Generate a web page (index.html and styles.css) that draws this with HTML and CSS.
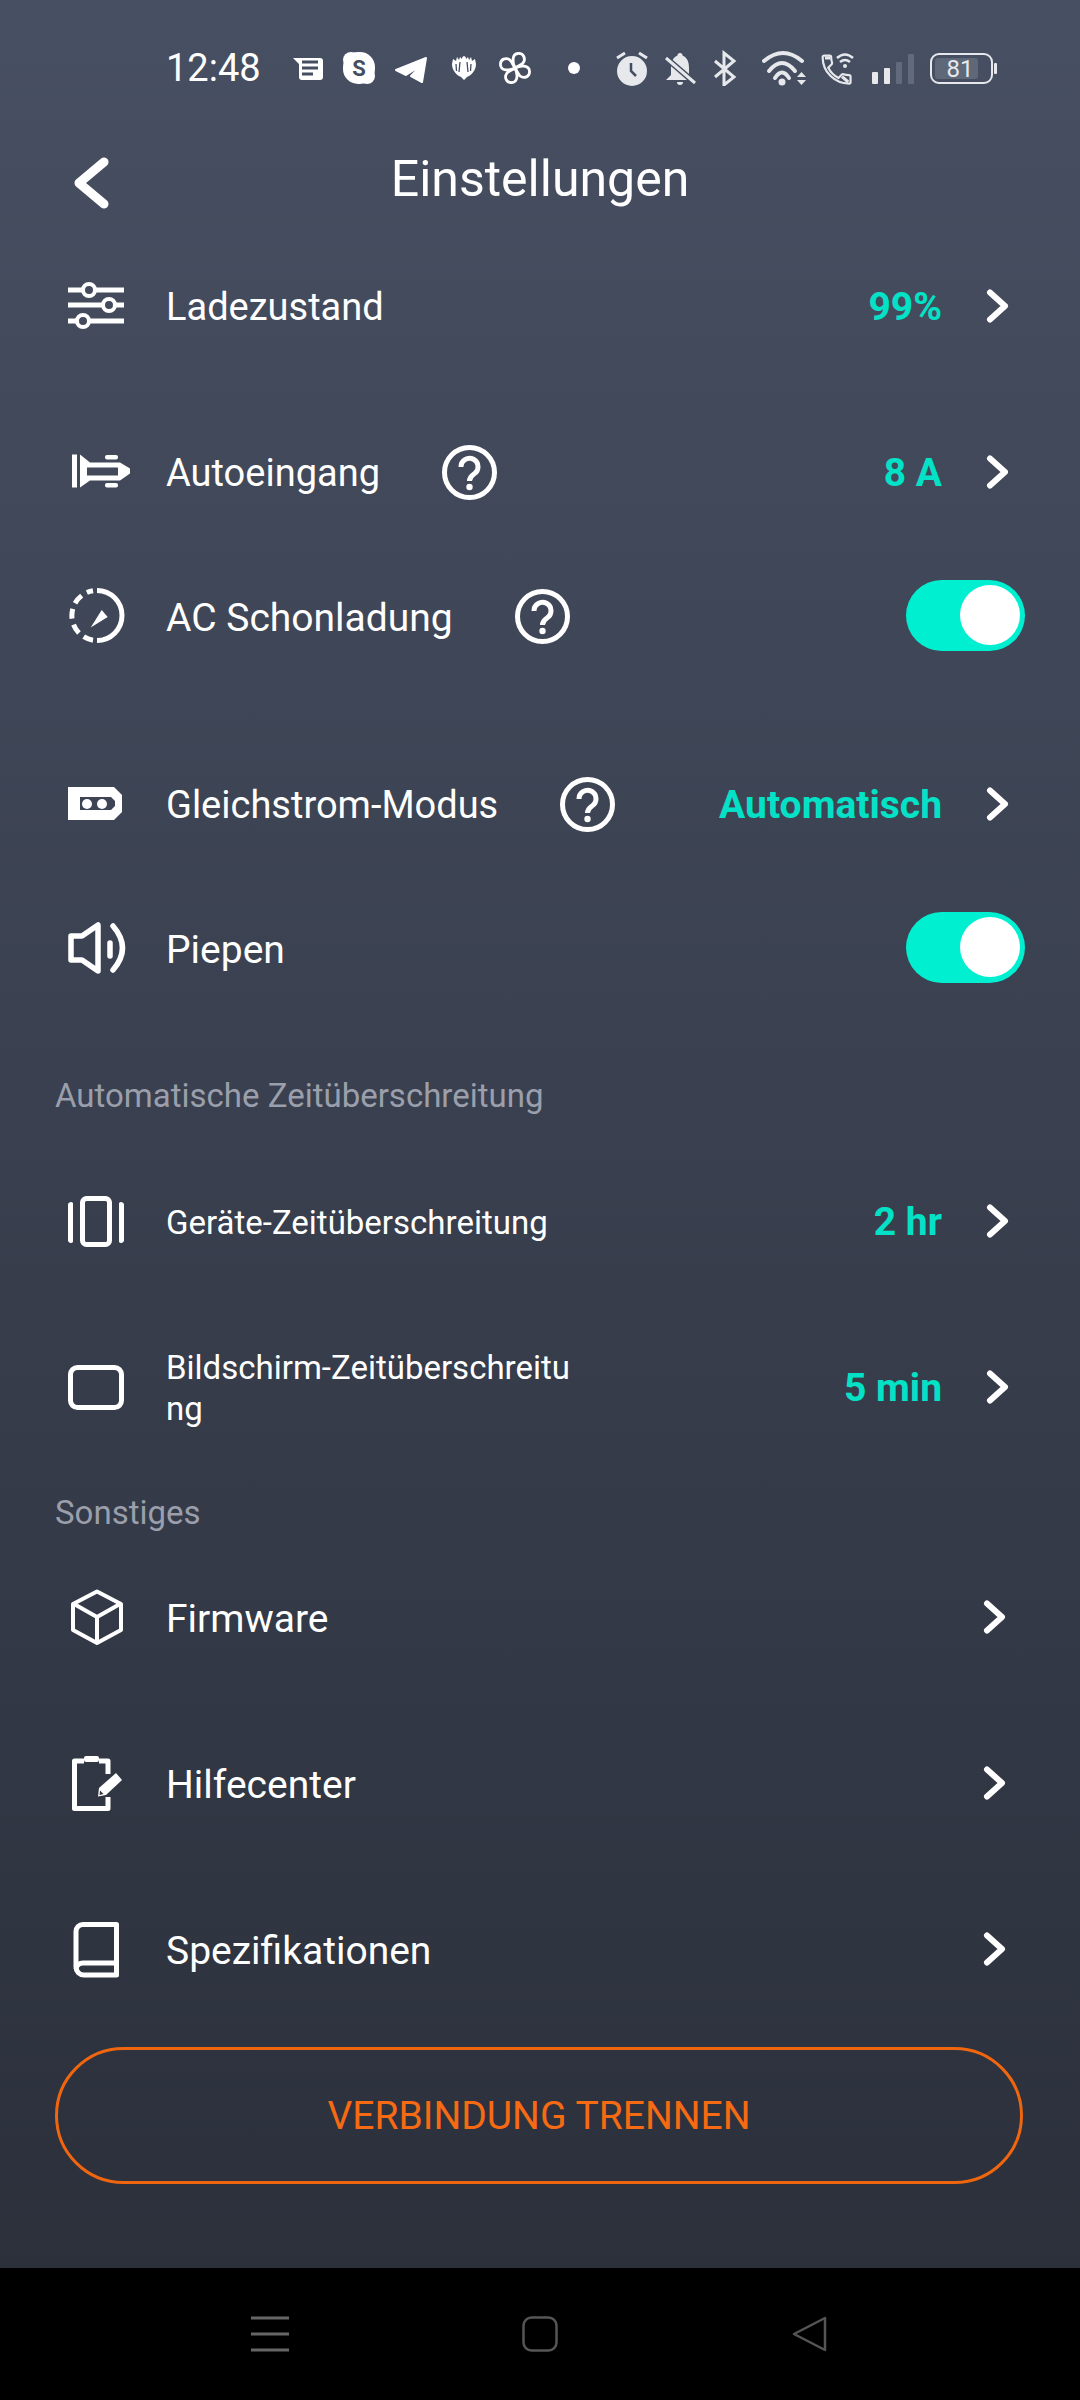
FILE: index.html
```html
<!DOCTYPE html>
<html lang="de">
<head>
    <meta charset="UTF-8">
    <title>Einstellungen</title>
    <link rel="stylesheet" href="styles.css">
</head>
<body>
<div class="status">
    <span class="clock">12:48</span>
    <svg class="st" width="50" height="36" viewBox="0 0 50 36"><path d="M0 8H27a3 3 0 0 1 3 3V27a3 3 0 0 1-3 3H9a3 3 0 0 1-3-3V14Z" fill="#fff"/><path d="M9 12H25M9 18H25M9 24H20" stroke="#454e60" stroke-width="3"/></svg>
    <svg class="st" width="52" height="36" viewBox="0 0 52 36"><rect x="0" y="2" width="32" height="32" rx="15" fill="#fff"/><circle cx="8" cy="10" r="8" fill="#fff"/><circle cx="24" cy="26" r="8" fill="#fff"/><text x="16" y="26" class="st-s">S</text></svg>
    <svg class="st" width="56" height="36" viewBox="0 0 56 36"><path d="M31 8L27 32L16 26L27 15L11 25L1 20Z" fill="#fff" stroke="#fff" stroke-width="2" stroke-linejoin="round"/></svg>
    <svg class="st" width="48" height="36" viewBox="0 0 48 36"><path d="M12.5 6c1.500 0 2.500 1 2.500 3l2-2 1 3 2-3 1 4 3-2 1 5c0 6-4 10-7 12l-2 1-3 3-3-3-2-1c-3-2-7-6-7-12l1-5 3 2 1-4 2 3 1-3 2 2c0-2 1-3 2.500-3Z" fill="#fff"/><path d="M9 12L8 22M5 14L5.500 21M16 12L17 22M20 14L19.500 21" stroke="#454e60" stroke-width="1.300"/></svg>
    <svg class="st" width="69" height="36" viewBox="0 0 69 36">
        <g fill="none" stroke="#fff" stroke-width="2.8" stroke-linejoin="round">
            <path d="M16 18C13 12 13 4 19 3.500C25 3 27 9 24 13C22 15 19 16 16 18Z"/>
            <path d="M16 18C13 12 13 4 19 3.500C25 3 27 9 24 13C22 15 19 16 16 18Z" transform="rotate(90 16 18)"/>
            <path d="M16 18C13 12 13 4 19 3.500C25 3 27 9 24 13C22 15 19 16 16 18Z" transform="rotate(180 16 18)"/>
            <path d="M16 18C13 12 13 4 19 3.500C25 3 27 9 24 13C22 15 19 16 16 18Z" transform="rotate(270 16 18)"/>
        </g>
    </svg>
    <svg class="st" width="48" height="36" viewBox="0 0 48 36"><circle cx="6" cy="18" r="6" fill="#fff"/></svg>
    <svg class="st" width="49" height="36" viewBox="0 0 49 36"><circle cx="16" cy="21" r="15" fill="#e6e8ec"/><path d="M15 13V21L20 26" fill="none" stroke="#454e60" stroke-width="2.5"/><path d="M1 8L9 3M31 8L23 3" stroke="#e6e8ec" stroke-width="3"/></svg>
    <svg class="st" width="49" height="36" viewBox="0 0 49 36"><path d="M15 3a2.500 2.500 0 0 1 2.500 2.500C23 8 24 13 24 18V25L29 30H1L6 25V18C6 13 7 8 12.500 5.500A2.500 2.500 0 0 1 15 3ZM12 32a3 3 0 0 0 6 0Z" fill="#e6e8ec"/><path d="M1 8L30 33" stroke="#454e60" stroke-width="6"/><path d="M1 8L30 33" stroke="#e6e8ec" stroke-width="3"/></svg>
    <svg class="st" width="48" height="36" viewBox="0 0 48 36"><path d="M1 11L20 27L10 35V3L20 11L1 27" fill="none" stroke="#e6e8ec" stroke-width="3"/></svg>
    <svg class="st" width="59" height="36" viewBox="0 0 59 36"><g fill="none" stroke="#e6e8ec" stroke-width="4" stroke-linecap="round"><path d="M2 11Q21-5 40 11"/><path d="M7 21Q20 5 33 21"/><path d="M13 28Q20 17 27 28"/></g><circle cx="20" cy="32" r="3.5" fill="#e6e8ec"/><path d="M35 27L39.500 22L44 27ZM35 30L39.500 35L44 30Z" fill="#e6e8ec"/></svg>
    <svg class="st" width="51" height="36" viewBox="0 0 51 36"><g transform="translate(-3 1) scale(1.55)"><path d="M6.620 10.790c1.440 2.830 3.760 5.140 6.590 6.590l2.200-2.200c.27-.27.67-.36 1.020-.24 1.120.37 2.330.57 3.570.57.55 0 1 .45 1 1V20c0 .55-.45 1-1 1-9.390 0-17-7.610-17-17 0-.55.45-1 1-1h3.500c.55 0 1 .45 1 1 0 1.250.2 2.450.57 3.570.11.35.03.74-.25 1.020l-2.200 2.200z" fill="none" stroke="#e6e8ec" stroke-width="1.4"/><path d="M4.500 4.500H8M15.500 16.500l4 3.500" stroke="#e6e8ec" stroke-width="2"/></g><g fill="none" stroke="#e6e8ec" stroke-width="2.5"><path d="M16 8Q24 1 32 8"/><path d="M19 12Q24 8 29 12"/></g><circle cx="24" cy="16" r="2" fill="#e6e8ec"/></svg>
    <svg class="st" width="58" height="36" viewBox="0 0 58 36"><rect x="0" y="22" width="6" height="12" rx="1" fill="#e6e8ec"/><rect x="12" y="18" width="6" height="16" rx="1" fill="#e6e8ec"/><rect x="24" y="12" width="6" height="22" rx="1" fill="#626b7c"/><rect x="36" y="4" width="6" height="30" rx="1" fill="#626b7c"/></svg>
    <svg class="st" width="68" height="36" viewBox="0 0 68 36"><rect x="1" y="4" width="61" height="29" rx="8" fill="none" stroke="#e6e8ec" stroke-width="2"/><rect x="5" y="8" width="43" height="21" rx="3" fill="#5f6878"/><rect x="64" y="13" width="3" height="11" rx="1" fill="#e6e8ec"/><text x="30" y="27" class="st-batt">81</text></svg>
</div>

<div class="topbar">
    <svg class="back" width="40" height="64" viewBox="0 0 40 64"><path d="M34 15L9 36L34 57" fill="none" stroke="#fff" stroke-width="9" stroke-linecap="round" stroke-linejoin="round"/></svg>
    <h1 class="title">Einstellungen</h1>
</div>

<div class="list">
    <div class="row">
        <svg class="ico" viewBox="0 0 56 56"><g fill="none" stroke="#fff" stroke-width="5"><path d="M0 12H15M27 12H56M0 27H35M47 27H56M0 43H9M21 43H56"/><g stroke-width="4"><circle cx="21" cy="12" r="6"/><circle cx="41" cy="27" r="6"/><circle cx="15" cy="43" r="6"/></g></g></svg>
        <span class="label">Ladezustand</span>
        <span class="value">99%</span>
        <svg class="chev" viewBox="0 0 28 40"><path d="M4 6.500L19 20L4 33.500"/></svg>
    </div>
    <div class="row">
        <svg class="ico" viewBox="0 0 56 56"><g fill="#fff"><rect x="4" y="10.5" width="5" height="33"/><path fill-rule="evenodd" d="M12 10.500L22 18.500H52L62 24.500V29.500L52 36.500H22L12 43.500ZM19 23.500V31.500H50V23.500Z"/><rect x="37" y="11" width="13" height="4.5" rx="2"/><rect x="37" y="39" width="13" height="4.5" rx="2"/></g></svg>
        <span class="label">Autoeingang</span>
        <svg class="help" viewBox="0 0 55 55"><circle cx="27.5" cy="27.5" r="25" fill="none" stroke="#fff" stroke-width="5"/><path d="M19 22a8.500 8.500 0 1 1 13 7c-3 2-4.500 3.500-4.500 7" fill="none" stroke="#fff" stroke-width="5"/><circle cx="27.5" cy="42" r="3.2" fill="#fff"/></svg>
        <span class="value">8 A</span>
        <svg class="chev" viewBox="0 0 28 40"><path d="M4 6.500L19 20L4 33.500"/></svg>
    </div>
    <div class="row row-near">
        <svg class="ico" viewBox="0 0 56 56"><g fill="none" stroke="#fff" stroke-width="5"><path d="M29 2.500A25 25 0 0 1 29 52.500"/><path d="M25 52.200A25 25 0 0 1 25 2.800" stroke-dasharray="10 6"/></g><path d="M33.700 22L39.700 29L22.700 39.600Z" fill="#fff"/></svg>
        <span class="label label-big">AC Schonladung</span>
        <svg class="help" viewBox="0 0 55 55"><circle cx="27.5" cy="27.5" r="25" fill="none" stroke="#fff" stroke-width="5"/><path d="M19 22a8.500 8.500 0 1 1 13 7c-3 2-4.500 3.500-4.500 7" fill="none" stroke="#fff" stroke-width="5"/><circle cx="27.5" cy="42" r="3.2" fill="#fff"/></svg>
        <span class="toggle"><span class="knob"></span></span>
    </div>
    <div class="row row-far">
        <svg class="ico" viewBox="0 0 56 56"><path fill="#fff" fill-rule="evenodd" d="M0 11H46L54 19V36L46 44H0ZM12 21V34H43L47 30V25L43 21Z"/><circle cx="19" cy="28" r="5" fill="#fff"/><circle cx="34" cy="28" r="5" fill="#fff"/></svg>
        <span class="label">Gleichstrom-Modus</span>
        <svg class="help" viewBox="0 0 55 55"><circle cx="27.5" cy="27.5" r="25" fill="none" stroke="#fff" stroke-width="5"/><path d="M19 22a8.500 8.500 0 1 1 13 7c-3 2-4.500 3.500-4.500 7" fill="none" stroke="#fff" stroke-width="5"/><circle cx="27.5" cy="42" r="3.2" fill="#fff"/></svg>
        <span class="value">Automatisch</span>
        <svg class="chev" viewBox="0 0 28 40"><path d="M4 6.500L19 20L4 33.500"/></svg>
    </div>
    <div class="row row-near">
        <svg class="ico" viewBox="0 0 56 56"><g fill="none" stroke="#fff" stroke-width="5.5" stroke-linecap="round" stroke-linejoin="round"><path d="M3 16H14L30 5V51L14 40H3Z"/><path d="M42 23V36"/><path d="M45 6Q64 28 45 50"/></g></svg>
        <span class="label label-big">Piepen</span>
        <span class="toggle"><span class="knob"></span></span>
    </div>

    <div class="section section-auto">Automatische Zeitüberschreitung</div>
    <div class="row row-tight">
        <svg class="ico" viewBox="0 0 56 56"><g fill="none" stroke="#fff" stroke-width="5"><rect x="14.5" y="5.5" width="27" height="46" rx="4"/></g><path d="M5 10a3 3 0 0 0-5 3V46a3 3 0 0 0 5 3ZM51 10a3 3 0 0 1 5 3V46a3 3 0 0 1-5 3Z" fill="#fff"/></svg>
        <span class="label label-small">Geräte-Zeitüberschreitung</span>
        <span class="value">2 hr</span>
        <svg class="chev" viewBox="0 0 28 40"><path d="M4 6.500L19 20L4 33.500"/></svg>
    </div>
    <div class="row">
        <svg class="ico" viewBox="0 0 56 56"><rect x="2.5" y="8.5" width="51" height="40" rx="7" fill="none" stroke="#fff" stroke-width="5"/></svg>
        <span class="label label-small label-wrap">Bildschirm-Zeitüberschreitu<br>ng</span>
        <span class="value">5 min</span>
        <svg class="chev" viewBox="0 0 28 40"><path d="M4 6.500L19 20L4 33.500"/></svg>
    </div>

    <div class="section section-misc">Sonstiges</div>
    <div class="row row-first row-plain">
        <svg class="ico" viewBox="0 0 56 56"><g fill="none" stroke="#fff" stroke-width="4" stroke-linejoin="round"><path d="M29 2.500L53 15V41L29 54L5 41V15Z"/><path d="M6 15L29 28L52 15M29 28V54"/></g></svg>
        <span class="label label-big">Firmware</span>
        <svg class="chev" viewBox="0 0 28 40"><path d="M4 6.500L19 20L4 33.500"/></svg>
    </div>
    <div class="row row-plain">
        <svg class="ico" viewBox="0 0 56 56"><g fill="none" stroke="#fff" stroke-width="5" stroke-linejoin="round"><path d="M16 6H6.500V53.500H40V42"/><path d="M31 6H40V19"/></g><rect x="16" y="1" width="15" height="6" rx="2" fill="#fff"/><path d="M48 18L54 25L38 40L30 41.500L31 33Z" fill="#fff"/><path d="M32 35.500L35.500 39L31.500 40Z" fill="#31363f"/></svg>
        <span class="label label-big">Hilfecenter</span>
        <svg class="chev" viewBox="0 0 28 40"><path d="M4 6.500L19 20L4 33.500"/></svg>
    </div>
    <div class="row row-plain">
        <svg class="ico" viewBox="0 0 56 56"><g fill="none" stroke="#fff" stroke-width="5" stroke-linejoin="round"><path d="M48.500 3.500H15a7 7 0 0 0-7 7V46a8 8 0 0 0 8 8H48.500Z"/><path d="M8 48a7 7 0 0 1 7-6H48.500"/></g></svg>
        <span class="label label-big">Spezifikationen</span>
        <svg class="chev" viewBox="0 0 28 40"><path d="M4 6.500L19 20L4 33.500"/></svg>
    </div>

    <div class="disconnect">VERBINDUNG TRENNEN</div>
</div>

<div class="navbar">
    <svg width="38" height="36" viewBox="0 0 38 36"><path d="M0 2H38M0 18H38M0 34H38" stroke="#666" stroke-width="3"/></svg>
    <svg width="36" height="36" viewBox="0 0 36 36"><rect x="1.5" y="1.5" width="33" height="33" rx="8" fill="none" stroke="#555" stroke-width="2.5"/></svg>
    <svg width="36" height="36" viewBox="0 0 36 36"><path d="M2 18L33 2V34Z" fill="none" stroke="#555" stroke-width="2.5" stroke-linejoin="round"/></svg>
</div>
</body>
</html>
```

FILE: styles.css
```css
*{
    margin:0;
    padding:0;
    box-sizing:border-box;
}
body{
    width:1080px;
    height:2400px;
    overflow:hidden;
    font-family:Roboto,"Noto Sans",sans-serif;
    color:#fff;
    background:linear-gradient(#474f62,#2b303b 2268px);
    display:flex;
    flex-direction:column;
}

/* status bar */
.status{
    height:136px;
    padding-left:166px;
    display:flex;
    align-items:center;
    flex:none;
}
.clock{
    width:127px;
    font-size:38px;
}
.st{
    flex:none;
}
.st-s{
    font:bold 22px Roboto,sans-serif;
    text-anchor:middle;
    fill:#454e60;
}
.st-batt{
    font:24px Roboto,sans-serif;
    text-anchor:middle;
    fill:#e6e8ec;
}

/* title */
.topbar{
    height:86px;
    flex:none;
    display:grid;
    grid-template-columns:1fr auto 1fr;
    align-items:center;
}
.back{
    margin-left:70px;
}
.title{
    font-size:50px;
    font-weight:400;
    grid-column:2;
}

/* rows */
.list{
    flex:1;
    padding-top:34px;
}
.row{
    height:100px;
    margin-top:66px;
    padding:0 55px 0 68px;
    display:flex;
    align-items:center;
}
.list .row:first-child{
    margin-top:0;
}
.row-near{
    margin-top:44px;
}
.row-far{
    margin-top:88px;
}
.row-tight{
    margin-top:50px;
}
.row-first{
    margin-top:29px;
}
.ico{
    width:56px;
    height:56px;
    margin-right:42px;
    flex:none;
    overflow:visible;
}
.label{
    font-size:38px;
    padding-top:2px;
}
.label-big{
    font-size:39px;
    padding-top:3px;
}
.label-small{
    font-size:33px;
}
.label-wrap{
    line-height:41px;
}
.help{
    width:55px;
    height:55px;
    margin-left:62px;
}
.value{
    margin-left:auto;
    padding-top:2px;
    font-size:39px;
    font-weight:700;
    color:#03e2c6;
}
.chev{
    width:28px;
    height:40px;
    margin-left:44px;
    margin-right:11px;
    flex:none;
}
.row-plain .chev{
    margin-left:auto;
    margin-right:14px;
}
.chev path{
    fill:none;
    stroke:#fff;
    stroke-width:6;
    stroke-linecap:round;
    stroke-linejoin:round;
}
.toggle{
    width:119px;
    height:71px;
    margin-left:auto;
    margin-bottom:2px;
    border-radius:36px;
    background:#00efd1;
    display:flex;
    align-items:center;
    justify-content:flex-end;
    padding-right:5px;
}
.knob{
    width:60px;
    height:60px;
    border-radius:50%;
    background:#fff;
}

/* section headings */
.section{
    height:50px;
    line-height:50px;
    padding-left:55px;
    font-size:33px;
    color:#9a9fab;
}
.section-auto{
    margin-top:73px;
}
.section-misc{
    margin-top:51px;
}

.disconnect{
    height:137px;
    margin:48px 57px 0 55px;
    border:3px solid #f0660f;
    border-radius:69px;
    display:flex;
    align-items:center;
    justify-content:center;
    font-size:39px;
    color:#f56a12;
}

/* android nav */
.navbar{
    height:132px;
    flex:none;
    background:#000;
    display:grid;
    grid-template-columns:271px 270px 1fr;
    padding-left:251px;
    padding-top:48px;
}
```
